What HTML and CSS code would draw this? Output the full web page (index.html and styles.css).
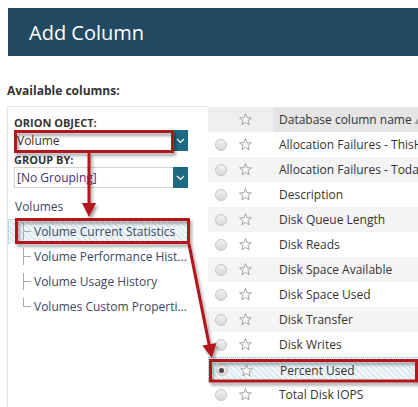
FILE: index.html
```html
<!DOCTYPE html>
<html>
<head>
<meta charset="utf-8">
<link rel="stylesheet" href="styles.css">
</head>
<body>
<div class="header">Add Column</div>
<div class="caption">Available columns:</div>
<div class="main">
  <div class="left">
    <div class="flabel">ORION OBJECT:</div>
    <div class="select">
      <div class="sval">Volume</div>
      <div class="sbtn"><svg width="9" height="6" viewBox="0 0 9 6"><polyline points="1,1 4.5,4.5 8,1" fill="none" stroke="#fff" stroke-width="1.2"/></svg></div>
    </div>
    <div class="flabel second">GROUP BY:</div>
    <div class="select">
      <div class="sval purple">[No Grouping]</div>
      <div class="sbtn"><svg width="9" height="6" viewBox="0 0 9 6"><polyline points="1,1 4.5,4.5 8,1" fill="none" stroke="#fff" stroke-width="1.2"/></svg></div>
    </div>
    <div class="group">Volumes</div>
    <ul class="tree">
      <li class="sel">Volume Current Statistics</li>
      <li>Volume Performance Hist...</li>
      <li>Volume Usage History</li>
      <li class="last">Volumes Custom Properti...</li>
    </ul>
  </div>
  <div class="table">
    <div class="row head"><span class="rc"></span><span class="sc"><svg class="star" width="13" height="13" viewBox="0 0 13 13"><polygon points="6.5,0.6 8.03,4.7 12.4,4.88 8.97,7.6 10.14,11.82 6.5,9.4 2.86,11.82 4.03,7.6 0.6,4.88 4.97,4.7"/></svg></span><span class="nm">Database column name <span class="sort">▴</span></span></div>
    <div class="row"><span class="rc"><i class="radio"></i></span><span class="sc"><svg class="star" width="13" height="13" viewBox="0 0 13 13"><polygon points="6.5,0.6 8.03,4.7 12.4,4.88 8.97,7.6 10.14,11.82 6.5,9.4 2.86,11.82 4.03,7.6 0.6,4.88 4.97,4.7"/></svg></span><span class="nm">Allocation Failures - ThisHour</span></div>
    <div class="row alt"><span class="rc"><i class="radio"></i></span><span class="sc"><svg class="star" width="13" height="13" viewBox="0 0 13 13"><polygon points="6.5,0.6 8.03,4.7 12.4,4.88 8.97,7.6 10.14,11.82 6.5,9.4 2.86,11.82 4.03,7.6 0.6,4.88 4.97,4.7"/></svg></span><span class="nm">Allocation Failures - Today</span></div>
    <div class="row"><span class="rc"><i class="radio"></i></span><span class="sc"><svg class="star" width="13" height="13" viewBox="0 0 13 13"><polygon points="6.5,0.6 8.03,4.7 12.4,4.88 8.97,7.6 10.14,11.82 6.5,9.4 2.86,11.82 4.03,7.6 0.6,4.88 4.97,4.7"/></svg></span><span class="nm">Description</span></div>
    <div class="row alt"><span class="rc"><i class="radio"></i></span><span class="sc"><svg class="star" width="13" height="13" viewBox="0 0 13 13"><polygon points="6.5,0.6 8.03,4.7 12.4,4.88 8.97,7.6 10.14,11.82 6.5,9.4 2.86,11.82 4.03,7.6 0.6,4.88 4.97,4.7"/></svg></span><span class="nm">Disk Queue Length</span></div>
    <div class="row"><span class="rc"><i class="radio"></i></span><span class="sc"><svg class="star" width="13" height="13" viewBox="0 0 13 13"><polygon points="6.5,0.6 8.03,4.7 12.4,4.88 8.97,7.6 10.14,11.82 6.5,9.4 2.86,11.82 4.03,7.6 0.6,4.88 4.97,4.7"/></svg></span><span class="nm">Disk Reads</span></div>
    <div class="row alt"><span class="rc"><i class="radio"></i></span><span class="sc"><svg class="star" width="13" height="13" viewBox="0 0 13 13"><polygon points="6.5,0.6 8.03,4.7 12.4,4.88 8.97,7.6 10.14,11.82 6.5,9.4 2.86,11.82 4.03,7.6 0.6,4.88 4.97,4.7"/></svg></span><span class="nm">Disk Space Available</span></div>
    <div class="row"><span class="rc"><i class="radio"></i></span><span class="sc"><svg class="star" width="13" height="13" viewBox="0 0 13 13"><polygon points="6.5,0.6 8.03,4.7 12.4,4.88 8.97,7.6 10.14,11.82 6.5,9.4 2.86,11.82 4.03,7.6 0.6,4.88 4.97,4.7"/></svg></span><span class="nm">Disk Space Used</span></div>
    <div class="row alt"><span class="rc"><i class="radio"></i></span><span class="sc"><svg class="star" width="13" height="13" viewBox="0 0 13 13"><polygon points="6.5,0.6 8.03,4.7 12.4,4.88 8.97,7.6 10.14,11.82 6.5,9.4 2.86,11.82 4.03,7.6 0.6,4.88 4.97,4.7"/></svg></span><span class="nm">Disk Transfer</span></div>
    <div class="row"><span class="rc"><i class="radio"></i></span><span class="sc"><svg class="star" width="13" height="13" viewBox="0 0 13 13"><polygon points="6.5,0.6 8.03,4.7 12.4,4.88 8.97,7.6 10.14,11.82 6.5,9.4 2.86,11.82 4.03,7.6 0.6,4.88 4.97,4.7"/></svg></span><span class="nm">Disk Writes</span></div>
    <div class="row sel"><span class="rc"><i class="radio on"></i></span><span class="sc"><svg class="star" width="13" height="13" viewBox="0 0 13 13"><polygon points="6.5,0.6 8.03,4.7 12.4,4.88 8.97,7.6 10.14,11.82 6.5,9.4 2.86,11.82 4.03,7.6 0.6,4.88 4.97,4.7"/></svg></span><span class="nm">Percent Used</span></div>
    <div class="row"><span class="rc"><i class="radio"></i></span><span class="sc"><svg class="star" width="13" height="13" viewBox="0 0 13 13"><polygon points="6.5,0.6 8.03,4.7 12.4,4.88 8.97,7.6 10.14,11.82 6.5,9.4 2.86,11.82 4.03,7.6 0.6,4.88 4.97,4.7"/></svg></span><span class="nm">Total Disk IOPS</span></div>
  </div>
</div>
<svg class="overlay" width="418" height="407" viewBox="0 0 418 407">
  <defs>
    <filter id="sh" x="-20%" y="-20%" width="140%" height="140%">
      <feDropShadow dx="2" dy="3" stdDeviation="1.8" flood-color="#000" flood-opacity="0.35"/>
    </filter>
  </defs>
  <g filter="url(#sh)" fill="none" stroke="#b3121a" stroke-width="3">
    <rect x="15.5" y="131.5" width="157" height="20"/>
    <rect x="16.5" y="219.5" width="172" height="23"/>
    <rect x="210.5" y="360.5" width="206" height="20.5"/>
    <line x1="89" y1="152" x2="89" y2="205"/>
    <line x1="189" y1="244" x2="209.6" y2="347"/>
  </g>
  <g filter="url(#sh)" fill="#b3121a">
    <polygon points="82,203 96,203 89,217"/>
    <polygon points="202.4,345.5 216.4,343 211.8,358"/>
  </g>
</svg>
</body>
</html>
```
FILE: styles.css
```css
html, body {
  margin: 0;
  padding: 0;
}
body {
  width: 418px;
  height: 407px;
  overflow: hidden;
  position: relative;
  background: #fff;
  font-family: "Open Sans", "DejaVu Sans", sans-serif;
  color: #333;
}
.header {
  margin: 8px 0 0 8px;
  height: 48px;
  box-sizing: border-box;
  padding: 1px 0 0 21px;
  background: #234a63;
  color: #fff;
  font-size: 20px;
  line-height: 48px;
}
.caption {
  margin-top: 27px;
  padding-left: 7px;
  height: 16px;
  font-size: 12px;
  line-height: 16px;
  font-weight: 700;
  color: #333;
}
.main {
  display: flex;
  margin: 7px 0 0 7px;
}
.left {
  box-sizing: border-box;
  width: 201px;
  height: 301px;
  flex: none;
  border-top: 1px solid #e4e4e4;
  border-left: 1px solid #e4e4e4;
  padding: 9px 0 0 6px;
}
.flabel {
  font-size: 11px;
  line-height: 13px;
  font-weight: 700;
  color: #333;
}
.flabel.second {
  margin-top: 2px;
}
.select {
  display: flex;
  width: 174px;
  height: 21px;
  margin-top: 1px;
}
.sval {
  flex: 1;
  box-sizing: border-box;
  border: 1px solid #d2d2d2;
  border-right: none;
  padding-left: 2px;
  font-size: 12px;
  line-height: 19px;
  color: #333;
  background: #fff;
}
.sval.purple {
  color: #43306a;
}
.sbtn {
  width: 15px;
  background: #1e6982;
  display: flex;
  align-items: center;
  justify-content: center;
}
.group {
  margin-top: 6px;
  padding-left: 1px;
  height: 25px;
  font-size: 12px;
  line-height: 25px;
  color: #3b4760;
}
.tree {
  list-style: none;
  margin: 0 0 0 -6px;
  padding: 0;
}
.tree li {
  position: relative;
  box-sizing: border-box;
  width: 181px;
  height: 25px;
  padding-left: 26px;
  font-size: 12px;
  line-height: 25px;
  color: #3b4760;
  white-space: nowrap;
}
.tree li::before {
  content: "";
  position: absolute;
  left: 15px;
  top: 4px;
  bottom: 4px;
  border-left: 1px solid #a8a8a8;
}
.tree li.last::before {
  bottom: 12px;
}
.tree li::after {
  content: "";
  position: absolute;
  left: 15px;
  top: 12px;
  width: 8px;
  border-top: 1px solid #a8a8a8;
}
.tree li.sel {
  background: repeating-linear-gradient(45deg, #dcebf1 0 2px, #f3f8fa 2px 4px);
  border-top: 1px dotted #9fbfcf;
  border-left: 1px dotted #9fbfcf;
  line-height: 24px;
  padding-left: 25px;
}
.tree li.sel::before {
  left: 14px;
  top: 3px;
}
.tree li.sel::after {
  left: 14px;
  top: 11px;
}
.table {
  width: 210px;
  flex: none;
  margin-top: 1px;
  overflow: hidden;
  white-space: nowrap;
}
.row {
  display: flex;
  align-items: center;
  height: 25px;
  font-size: 12px;
  color: #333;
}
.row.head {
  background: #efefef;
}
.row.alt {
  background: #f4f4f4;
}
.row.sel {
  box-sizing: border-box;
  background: repeating-linear-gradient(45deg, #dcebf1 0 2px, #f3f8fa 2px 4px);
  border-top: 1px dotted #9fbfcf;
  border-left: 1px dotted #9fbfcf;
}
.rc, .sc {
  width: 25px;
  flex: none;
  display: flex;
  align-items: center;
  justify-content: center;
}
.radio {
  display: block;
  box-sizing: border-box;
  width: 12px;
  height: 12px;
  border-radius: 50%;
  border: 1px solid #c4c4c4;
  background: linear-gradient(#f2f2f2, #d9d9d9);
  position: relative;
}
.radio.on::after {
  content: "";
  position: absolute;
  left: 2.5px;
  top: 2.5px;
  width: 5px;
  height: 5px;
  border-radius: 50%;
  background: #4a4a4a;
}
.star polygon {
  fill: #fff;
  stroke: #a3a3a3;
  stroke-width: 1;
  stroke-linejoin: round;
}
.row.alt .star polygon, .row.head .star polygon {
  fill: #f8f8f8;
}
.nm {
  margin-left: 15px;
  padding-left: 6px;
  line-height: 25px;
  height: 25px;
}
.row.head .nm {
  flex: 1;
  background: #e5e5e5;
}
.sort {
  color: #999;
  font-size: 10px;
}
.overlay {
  position: absolute;
  left: 0;
  top: 0;
  pointer-events: none;
}
```
